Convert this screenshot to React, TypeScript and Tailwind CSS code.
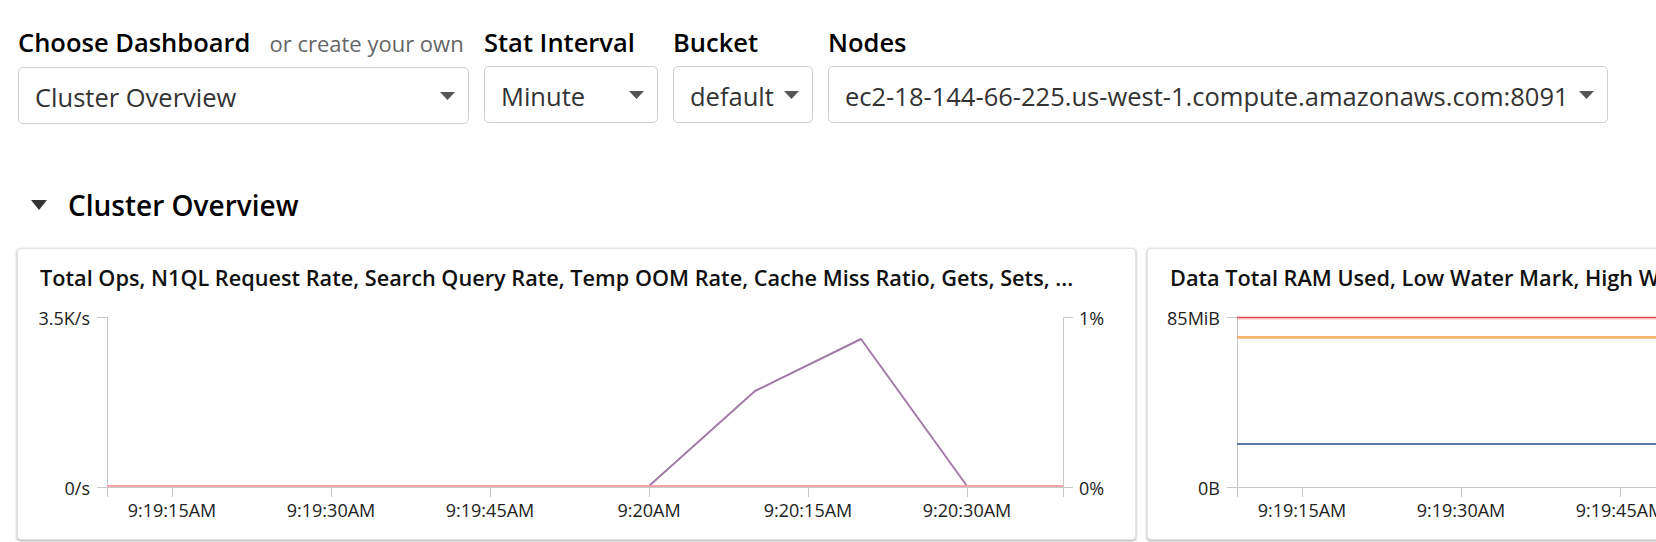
import React from 'react';

interface SelectBoxProps {
  value: string;
  className: string;
}

interface Series {
  color: string;
  width: number;
  points: [number, number][];
}

interface ChartCardProps {
  title: string;
  leftTop: string;
  leftBottom: string;
  rightTop?: string;
  rightBottom?: string;
  series: Series[];
}

// chart geometry, in svg coords
const X0 = 89;
const X1 = 1045;
const Y0 = 25;
const Y1 = 195;
const TICK = 10;

const xTicks = [
  { x: 154, label: '9:19:15AM' },
  { x: 313, label: '9:19:30AM' },
  { x: 472, label: '9:19:45AM' },
  { x: 631, label: '9:20AM' },
  { x: 790, label: '9:20:15AM' },
  { x: 949, label: '9:20:30AM' },
];

const Caret = () => (
  <svg width="15" height="8" viewBox="0 0 15 8" className="shrink-0">
    <path d="M0 0H15L7.5 8Z" fill="#555" />
  </svg>
);

const SelectBox: React.FC<SelectBoxProps> = ({ value, className }) => (
  <div
    className={`flex h-[57px] items-center justify-between rounded-[5px] border border-[#d0d0d0] bg-white pl-4 pr-[13px] ${className}`}
  >
    <span className="mt-[3px] whitespace-nowrap text-[25.5px] leading-[25px] text-[#333]">{value}</span>
    <Caret />
  </div>
);

const ChartCard: React.FC<ChartCardProps> = ({ title, leftTop, leftBottom, rightTop, rightBottom, series }) => {
  const gray = '#c8c8c8';
  return (
    <div className="h-[292px] w-[1119px] shrink-0 overflow-hidden rounded-[4px] border border-[#e2e2e2] bg-white shadow-[0_1px_3px_rgba(0,0,0,0.35)]">
      {/* Title */}
      <div className="overflow-hidden whitespace-nowrap pl-[22px] pt-[15px] text-[21.7px] font-semibold leading-[28px] text-[#111]">
        {title}
      </div>

      <svg width="1117" height="247" className="block" fontFamily="'Open Sans', sans-serif" fontSize="18">
        {/* left axis */}
        <path d={`M${X0 - TICK},${Y0 + 0.5}H${X0 + 0.5}V${Y1 + 0.5}H${X0 - TICK}`} fill="none" stroke={gray} />
        <text x={X0 - 17} y={Y0 + 8} textAnchor="end" fill="#222">{leftTop}</text>
        <text x={X0 - 17} y={Y1 + 8} textAnchor="end" fill="#222">{leftBottom}</text>

        {/* right axis */}
        {rightTop && (
          <>
            <path d={`M${X1 + TICK},${Y0 + 0.5}H${X1 + 0.5}V${Y1 + 0.5}H${X1 + TICK}`} fill="none" stroke={gray} />
            <text x={X1 + 16} y={Y0 + 8} fill="#222">{rightTop}</text>
            <text x={X1 + 16} y={Y1 + 8} fill="#222">{rightBottom}</text>
          </>
        )}

        {/* x axis */}
        <path d={`M${X0 + 0.5},${Y1 + TICK}V${Y1 + 0.5}H${X1 + 0.5}V${Y1 + TICK}`} fill="none" stroke={gray} />
        {xTicks.map((t) => (
          <g key={t.label}>
            <line x1={t.x + 0.5} x2={t.x + 0.5} y1={Y1} y2={Y1 + TICK} stroke={gray} />
            <text x={t.x} y={Y1 + 30} textAnchor="middle" fill="#222">{t.label}</text>
          </g>
        ))}

        {/* series */}
        {series.map((s, i) => (
          <polyline
            key={i}
            points={s.points.map((p) => p.join(',')).join(' ')}
            fill="none"
            stroke={s.color}
            strokeWidth={s.width}
            strokeLinejoin="round"
          />
        ))}
      </svg>
    </div>
  );
};

const App: React.FC = () => {
  return (
    <div className="h-[542px] w-full overflow-hidden bg-white pl-[18px] pt-[25px] font-['Open_Sans',sans-serif] text-black">
      {/* Filters */}
      <div className="flex gap-[15px]">
        <div className="w-[451px] shrink-0">
          <div className="mb-[7px] flex items-baseline whitespace-nowrap">
            <span className="text-[25.5px] font-semibold leading-[34px]">Choose Dashboard</span>
            <span className="ml-[19px] text-[22px] leading-[34px] text-[#666]">or create your own</span>
          </div>
          <SelectBox value="Cluster Overview" className="w-[451px]" />
        </div>
        <div className="w-[174px] shrink-0">
          <div className="mb-[7px] whitespace-nowrap text-[25.5px] font-semibold leading-[34px]">Stat Interval</div>
          <SelectBox value="Minute" className="w-[174px]" />
        </div>
        <div className="w-[140px] shrink-0">
          <div className="mb-[7px] whitespace-nowrap text-[25.5px] font-semibold leading-[34px]">Bucket</div>
          <SelectBox value="default" className="w-[140px]" />
        </div>
        <div className="w-[780px] shrink-0">
          <div className="mb-[7px] whitespace-nowrap text-[25.5px] font-semibold leading-[34px]">Nodes</div>
          <SelectBox value="ec2-18-144-66-225.us-west-1.compute.amazonaws.com:8091" className="w-[780px]" />
        </div>
      </div>

      {/* Section header */}
      <div className="mt-[62px] flex items-center">
        <svg width="16" height="10" viewBox="0 0 16 10" className="ml-[13px] shrink-0">
          <path d="M0 0H16L8 10Z" fill="#333" />
        </svg>
        <h2 className="ml-[21px] text-[28px] font-semibold leading-[38px]">Cluster Overview</h2>
      </div>

      {/* Charts */}
      <div className="-ml-px mt-[24px] flex gap-[11px]">
        <ChartCard
          title="Total Ops, N1QL Request Rate, Search Query Rate, Temp OOM Rate, Cache Miss Ratio, Gets, Sets, ..."
          leftTop="3.5K/s"
          leftBottom="0/s"
          rightTop="1%"
          rightBottom="0%"
          series={[
            { color: '#a37ba9', width: 2, points: [[631, 194], [737, 99], [843, 47], [949, 194]] },
            { color: '#f4a4a8', width: 2, points: [[X0, 194], [X1, 194]] },
          ]}
        />
        <ChartCard
          title="Data Total RAM Used, Low Water Mark, High Water Mark, ..."
          leftTop="85MiB"
          leftBottom="0B"
          series={[
            { color: '#f6b9bb', width: 1, points: [[X0, 27], [1117, 27]] },
            { color: '#e2474d', width: 1.5, points: [[X0, 25.5], [1117, 25.5]] },
            { color: '#f9c48f', width: 1, points: [[X0, 46.5], [1117, 46.5]] },
            { color: '#f59a3e', width: 1.5, points: [[X0, 45], [1117, 45]] },
            { color: '#5877ab', width: 2, points: [[X0, 152], [1117, 152]] },
          ]}
        />
      </div>
    </div>
  );
};

export default App;
